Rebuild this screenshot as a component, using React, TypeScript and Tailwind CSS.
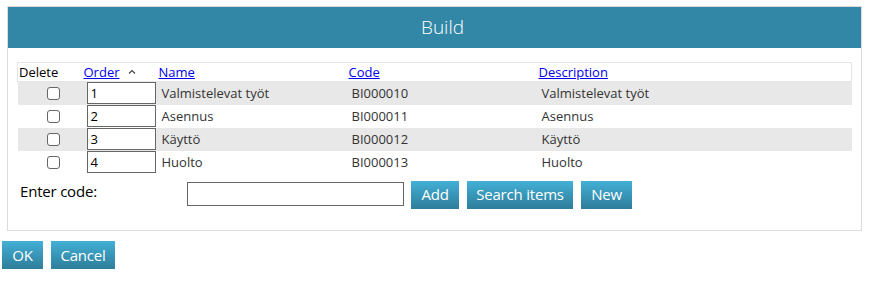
const rows = [
  { order: "1", name: "Valmistelevat työt", code: "BI000010", description: "Valmistelevat työt" },
  { order: "2", name: "Asennus", code: "BI000011", description: "Asennus" },
  { order: "3", name: "Käyttö", code: "BI000012", description: "Käyttö" },
  { order: "4", name: "Huolto", code: "BI000013", description: "Huolto" },
];

const btn =
  "h-[28px] text-[15px] leading-none text-white text-center tracking-[-0.2px] bg-gradient-to-b from-[#43b0d6] to-[#2e7d9a]";

export default function App() {
  return (
    <div className="w-[871px] h-[281px] bg-white text-[13px] text-[#333]" style={{ fontFamily: '"Open Sans", sans-serif' }}>
      <div className="pt-[6px] pl-[7px]">
        <div className="w-[855px] h-[225px] border border-[#dcdcdc]">
          <div className="h-[41px] bg-[#3387a6] flex items-center justify-center pl-[16px] text-white text-[19px] font-light">
            Build
          </div>
          <div className="pl-[9px] pt-[14px]">
            <table className="w-[835px] border-collapse table-fixed leading-[17px]">
              <thead>
                <tr className="h-[19px] border border-[#e5e5e5] text-left">
                  <th className="w-[66px] font-normal text-black p-0 pl-[1px]">Delete</th>
                  <th className="w-[75px] font-normal p-0">
                    <a href="#" className="text-[#0000ee] underline">Order</a>
                    {/* sort caret */}
                    <svg width="8" height="5" viewBox="0 0 8 5" className="inline-block ml-[8px] mb-[4px]">
                      <path d="M1 4.5 L4 1.5 L7 4.5" fill="none" stroke="#444" strokeWidth="1.2" />
                    </svg>
                  </th>
                  <th className="w-[190px] font-normal p-0">
                    <a href="#" className="text-[#0000ee] underline">Name</a>
                  </th>
                  <th className="w-[190px] font-normal p-0">
                    <a href="#" className="text-[#0000ee] underline">Code</a>
                  </th>
                  <th className="font-normal p-0">
                    <a href="#" className="text-[#0000ee] underline">Description</a>
                  </th>
                </tr>
              </thead>
              <tbody>
                {rows.map((r, i) => (
                  <tr key={r.order} className={`h-[23px] ${i % 2 === 0 ? "bg-[#e8e8e8]" : "bg-white"}`}>
                    <td className="p-0 pl-[29px]">
                      <div className="w-[13px] h-[13px] border border-[#666] rounded-[3px] bg-white" />
                    </td>
                    <td className="p-0 pl-[3px]">
                      <div className="w-[69px] h-[22px] border border-[#666] bg-white text-black pl-[3px] leading-[20px]">
                        {r.order}
                      </div>
                    </td>
                    <td className="p-0 pl-[3px]">{r.name}</td>
                    <td className="p-0 pl-[3px]">{r.code}</td>
                    <td className="p-0 pl-[3px]">{r.description}</td>
                  </tr>
                ))}
              </tbody>
            </table>
            <div className="flex items-start mt-[7px]">
              <div className="w-[170px] pl-[3px] text-[15px] text-black leading-none pt-[3px] tracking-[-0.2px]">Enter code:</div>
              <div className="w-[217px] h-[24px] mt-[1px] border border-[#666] bg-white" />
              <div className="flex gap-[8px] ml-[7px]">
                <button className={`${btn} w-[48px]`}>Add</button>
                <button className={`${btn} w-[106px]`}>Search items</button>
                <button className={`${btn} w-[51px]`}>New</button>
              </div>
            </div>
          </div>
        </div>
      </div>
      <div className="flex gap-[8px] pl-[2px] pt-[10px]">
        <button className={`${btn} w-[41px]`}>OK</button>
        <button className={`${btn} w-[64px]`}>Cancel</button>
      </div>
    </div>
  );
}
